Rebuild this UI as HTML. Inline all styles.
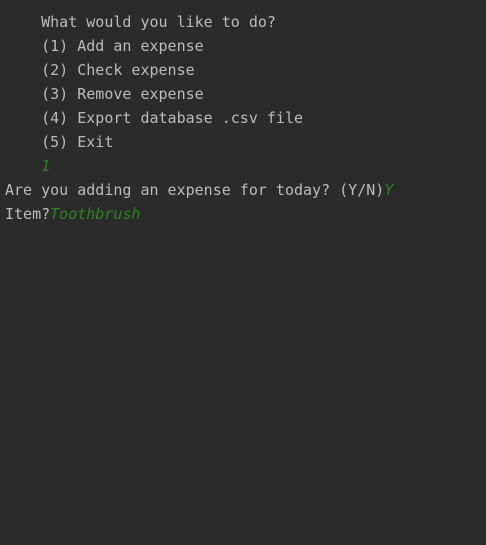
<!DOCTYPE html>
<html><head><style>
html,body{margin:0;padding:0;background:#2b2b2b;width:486px;height:545px;overflow:hidden}
pre{margin:0;position:absolute;left:5px;top:10px;font-family:"DejaVu Sans Mono","Liberation Mono",monospace;font-size:15px;line-height:24px;color:#bbbbbb;font-weight:normal}
i{color:#2a8422;font-style:italic}
</style></head><body>
<pre>    What would you like to do?
    (1) Add an expense
    (2) Check expense
    (3) Remove expense
    (4) Export database .csv file
    (5) Exit
    <i>1</i>
Are you adding an expense for today? (Y/N)<i>Y</i>
Item?<i>Toothbrush</i></pre>
</body></html>
